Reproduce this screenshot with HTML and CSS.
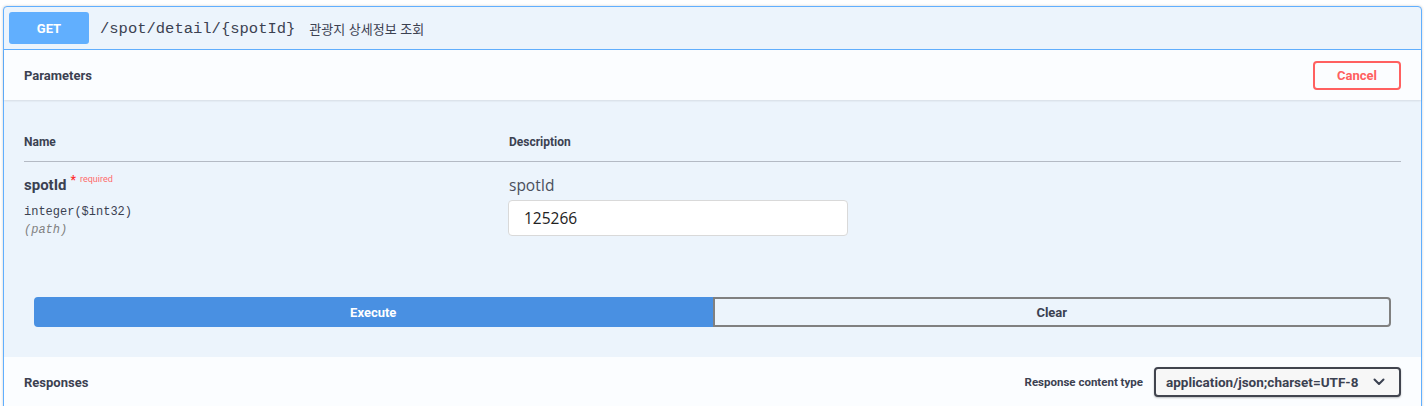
FILE: index.html
```html
<!DOCTYPE html>
<html lang="ko">
<head>
<meta charset="utf-8">
<title>Swagger</title>
<link rel="stylesheet" href="styles.css">
</head>
<body>
<div class="opblock">
  <div class="summary">
    <span class="method">GET</span>
    <span class="path">/spot/detail/{spotId}</span>
    <span class="summary-desc">관광지 상세정보 조회</span>
  </div>
  <div class="section-header">
    <h4 class="section-title">Parameters</h4>
    <button class="btn-cancel">Cancel</button>
  </div>
  <div class="params">
    <div class="params-head">
      <div class="col-name">Name</div>
      <div class="col-desc">Description</div>
    </div>
    <div class="param-row">
      <div class="col-name">
        <div class="pname">spotId<span class="star">*</span><span class="req">required</span></div>
        <div class="ptype">integer($int32)</div>
        <div class="pin">(path)</div>
      </div>
      <div class="col-desc">
        <div class="pdesc">spotId</div>
        <input class="pinput" type="text" value="125266">
      </div>
    </div>
  </div>
  <div class="execute-wrapper">
    <button class="btn-execute">Execute</button>
    <button class="btn-clear">Clear</button>
  </div>
  <div class="section-header responses">
    <h4 class="section-title">Responses</h4>
    <div class="content-type">
      <span class="ct-label">Response content type</span>
      <div class="ct-select">
        <span>application/json;charset=UTF-8</span>
        <svg class="chev" width="12" height="8" viewBox="0 0 12 8"><path d="M1.5 1.5 L6 6 L10.5 1.5" fill="none" stroke="#3b4151" stroke-width="2" stroke-linecap="round" stroke-linejoin="round"/></svg>
      </div>
    </div>
  </div>
</div>
</body>
</html>
```

FILE: styles.css
```css
* { box-sizing: border-box; }
html, body { margin: 0; padding: 0; background: #ffffff; }
body {
  padding: 6px 4px 0 3px;
  font-family: Roboto, "Noto Sans", "Noto Sans CJK KR", sans-serif;
  color: #3b4151;
  height: 406px;
  overflow: hidden;
}
.opblock {
  border: 1px solid #61affe;
  border-radius: 4px;
  background: #ecf4fc;
  box-shadow: 0 0 3px rgba(0,0,0,.19);
  min-height: 420px;
}
.summary {
  display: flex;
  align-items: center;
  padding: 5px;
  border-bottom: 1px solid #61affe;
}
.method {
  display: inline-block;
  min-width: 80px;
  padding: 7px 15px 5px;
  line-height: 20px;
  font-size: 13px;
  font-weight: 700;
  text-align: center;
  color: #fff;
  background: #61affe;
  border-radius: 3px;
}
.path {
  padding: 1px 14px 0 11px;
  font-family: "Liberation Mono", "DejaVu Sans Mono", monospace;
  font-size: 15.5px;
  color: #3b4151;
}
.summary-desc {
  padding-top: 1px;
  font-family: "Noto Sans CJK KR", "Noto Sans", sans-serif;
  font-size: 13px;
  color: #3b4151;
}
.section-header {
  display: flex;
  align-items: center;
  justify-content: space-between;
  min-height: 50px;
  padding: 8px 20px;
  background: #fbfdff;
  box-shadow: 0 1px 2px rgba(0,0,0,.1);
}
.section-title {
  margin: 0;
  padding-top: 1px;
  font-size: 13px;
  font-weight: 700;
  color: #3b4151;
}
.btn-cancel {
  width: 88px;
  height: 29px;
  padding: 0;
  border: 2px solid #ff6060;
  border-radius: 4px;
  background: transparent;
  color: #ff6060;
  font-family: Roboto, sans-serif;
  font-size: 13px;
  font-weight: 700;
}
.params {
  padding: 20px 20px 18px 20px;
}
.params-head {
  display: flex;
  padding: 14px 0 11px;
  line-height: 16px;
  font-size: 12px;
  font-weight: 700;
  border-bottom: 1px solid #b4bac4;
}
.col-name { width: 485px; flex: none; }
.col-desc { flex: 1; }
.param-row {
  display: flex;
  padding: 11px 0 10px;
}
.pname {
  line-height: 24px;
  font-size: 15px;
  font-weight: 700;
}
.star {
  position: relative;
  top: -6px;
  margin-left: 4px;
  font-size: 12px;
  color: #ff3030;
}
.req {
  position: relative;
  top: -8px;
  margin-left: 4px;
  font-size: 9px;
  font-weight: 400;
  color: #ff6b6b;
}
.ptype {
  margin-top: 4px;
  line-height: 18px;
  font-family: "Liberation Mono", "DejaVu Sans Mono", monospace;
  font-size: 12px;
}
.pin {
  line-height: 18px;
  font-family: "Liberation Mono", "DejaVu Sans Mono", monospace;
  font-size: 12px;
  font-style: italic;
  color: #808080;
}
.pdesc {
  line-height: 24px;
  font-family: "Open Sans", "Noto Sans", sans-serif;
  font-size: 15.5px;
  color: #4a4f5c;
}
.pinput {
  display: block;
  margin-top: 3px;
  margin-left: -1px;
  width: 340px;
  height: 36px;
  padding: 0 15px;
  border: 1px solid #d9d9d9;
  border-radius: 4px;
  background: #fff;
  font-family: "Open Sans", "Noto Sans", sans-serif;
  font-size: 15.5px;
  color: #222;
  outline: none;
}
.execute-wrapper {
  display: flex;
  padding: 30px 30px 30px 30px;
}
.btn-execute, .btn-clear {
  flex: 1;
  height: 30px;
  padding: 0;
  font-family: Roboto, sans-serif;
  font-size: 13px;
  font-weight: 700;
}
.btn-execute {
  background: #4990e2;
  border: 2px solid #4990e2;
  color: #fff;
  border-radius: 4px 0 0 4px;
}
.btn-clear {
  background: transparent;
  border: 2px solid #808080;
  color: #3b4151;
  border-radius: 0 4px 4px 0;
}
.responses { box-shadow: none; align-items: center; }
.content-type {
  display: flex;
  align-items: center;
  gap: 11px;
}
.ct-label {
  font-size: 11.5px;
  font-weight: 700;
}
.ct-select {
  display: flex;
  align-items: center;
  justify-content: space-between;
  width: 247px;
  height: 30px;
  padding: 0 14px 0 10px;
  border: 2px solid #41444e;
  border-radius: 4px;
  background: #f7f7f7;
  box-shadow: 0 1px 2px rgba(0,0,0,.25);
  font-size: 13.5px;
  font-weight: 700;
}
.chev { display: block; }
```
